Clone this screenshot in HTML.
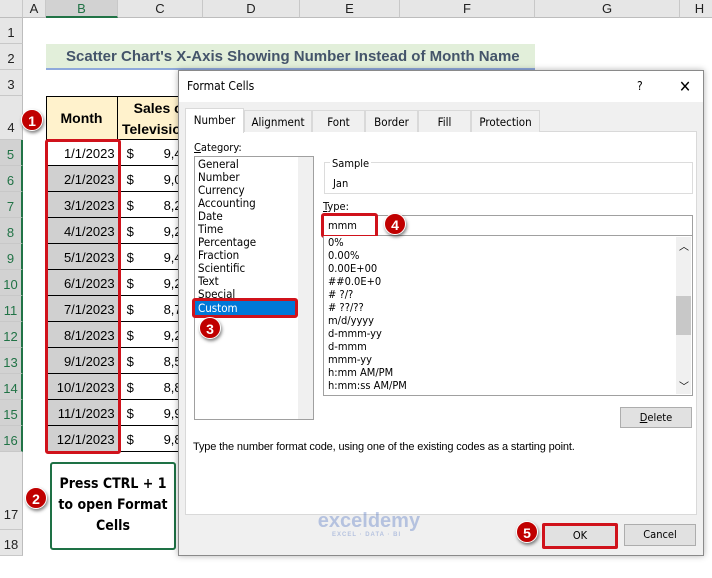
<!DOCTYPE html>
<html><head><style>
*{margin:0;padding:0;box-sizing:border-box}
body{width:712px;height:556px;overflow:hidden;background:#fff;font-family:"Liberation Sans",sans-serif;position:relative}
.a{position:absolute}
.ch{top:0;height:18px;background:#e6e6e6;border-right:1px solid #c8c8c8;border-bottom:1px solid #bdbdbd;font-size:13px;color:#222;text-align:center;line-height:18px}
.rh{left:0;width:23px;background:#e6e6e6;border-bottom:1px solid #c8c8c8;border-right:1px solid #bdbdbd;font-size:13px;color:#222;text-align:center}
.rs{background:#d2d2d2;color:#217346;border-right:2px solid #217346}
.cell{border-bottom:1px solid #000;font-size:13px;height:26px;display:flex}
.cell .d{width:72px;text-align:right;padding:6px 3px 0 0;border-right:1px solid #000;background:#d0d0d0}
.cell .v{position:relative;width:85px}
.cell .v b{font-weight:normal;position:absolute;left:8px;top:6px}
.cell .v i{font-style:normal;position:absolute;left:45px;top:6px}
.badge{width:22px;height:22px;border-radius:50%;background:#c00000;color:#fff;font-weight:bold;font-size:14px;text-align:center;line-height:22px;box-shadow:1px 2px 3px rgba(0,0,0,.5);border:1px solid #fff}
.dl{font-family:"DejaVu Sans Condensed","DejaVu Sans",sans-serif;font-size:11px;color:#000}
.tab{top:110px;height:22px;border:1px solid #d9d9d9;border-bottom:none;background:#f0f0f0;font-size:11.5px;line-height:22px;text-align:center}
</style></head><body>
<div class="a ch" style="left:0;width:23px;background:#e6e6e6"></div>
<div class="a ch" style="left:23px;width:23px">A</div>
<div class="a ch" style="left:46px;width:72px;background:#d2d2d2;color:#217346;border-bottom:2px solid #217346">B</div>
<div class="a ch" style="left:118px;width:85px">C</div>
<div class="a ch" style="left:203px;width:97px">D</div>
<div class="a ch" style="left:300px;width:100px">E</div>
<div class="a ch" style="left:400px;width:135px">F</div>
<div class="a ch" style="left:535px;width:145px">G</div>
<div class="a ch" style="left:680px;width:40px">H</div>
<div class="a rh" style="top:18px;height:26px;line-height:30px">1</div>
<div class="a rh" style="top:44px;height:26px;line-height:30px">2</div>
<div class="a rh" style="top:70px;height:26px;line-height:30px">3</div>
<div class="a rh" style="top:96px;height:44px;line-height:64px">4</div>
<div class="a rh rs" style="top:140px;height:26px;line-height:30px">5</div>
<div class="a rh rs" style="top:166px;height:26px;line-height:30px">6</div>
<div class="a rh rs" style="top:192px;height:26px;line-height:30px">7</div>
<div class="a rh rs" style="top:218px;height:26px;line-height:30px">8</div>
<div class="a rh rs" style="top:244px;height:26px;line-height:30px">9</div>
<div class="a rh rs" style="top:270px;height:26px;line-height:30px">10</div>
<div class="a rh rs" style="top:296px;height:26px;line-height:30px">11</div>
<div class="a rh rs" style="top:322px;height:26px;line-height:30px">12</div>
<div class="a rh rs" style="top:348px;height:26px;line-height:30px">13</div>
<div class="a rh rs" style="top:374px;height:26px;line-height:30px">14</div>
<div class="a rh rs" style="top:400px;height:26px;line-height:30px">15</div>
<div class="a rh rs" style="top:426px;height:26px;line-height:30px">16</div>
<div class="a rh" style="top:452px;height:78px;line-height:126px">17</div>
<div class="a rh" style="top:530px;height:26px;line-height:30px">18</div>
<div class="a" style="left:46px;top:44px;width:489px;height:26px;background:#e2efda;border-bottom:2px solid #8ea9db;font-weight:bold;font-size:15px;color:#44546a;line-height:25px;padding-left:20px">Scatter Chart's X-Axis Showing Number Instead of Month Name</div>
<div class="a" style="left:46px;top:96px;width:157px;height:44px;border:1px solid #000;background:#fff2cc"></div>
<div class="a" style="left:46px;top:96px;width:72px;height:44px;border-right:1px solid #000;font-weight:bold;font-size:14px;line-height:44px;text-align:center">Month</div>
<div class="a" style="left:122px;top:98px;width:80px;font-weight:bold;font-size:14px;line-height:21px;overflow:hidden;white-space:nowrap">&nbsp;&nbsp;&nbsp;Sales of<br>Television</div>
<div class="a" style="left:46px;top:140px;width:157px;height:312px;border-left:1px solid #000">
<div class="cell"><div class="d" style="background:#fff">1/1/2023</div><div class="v"><b>$</b><i>9,4</i></div></div>
<div class="cell"><div class="d">2/1/2023</div><div class="v"><b>$</b><i>9,0</i></div></div>
<div class="cell"><div class="d">3/1/2023</div><div class="v"><b>$</b><i>8,2</i></div></div>
<div class="cell"><div class="d">4/1/2023</div><div class="v"><b>$</b><i>9,2</i></div></div>
<div class="cell"><div class="d">5/1/2023</div><div class="v"><b>$</b><i>9,4</i></div></div>
<div class="cell"><div class="d">6/1/2023</div><div class="v"><b>$</b><i>9,2</i></div></div>
<div class="cell"><div class="d">7/1/2023</div><div class="v"><b>$</b><i>8,7</i></div></div>
<div class="cell"><div class="d">8/1/2023</div><div class="v"><b>$</b><i>9,2</i></div></div>
<div class="cell"><div class="d">9/1/2023</div><div class="v"><b>$</b><i>8,5</i></div></div>
<div class="cell"><div class="d">10/1/2023</div><div class="v"><b>$</b><i>8,8</i></div></div>
<div class="cell"><div class="d">11/1/2023</div><div class="v"><b>$</b><i>9,9</i></div></div>
<div class="cell"><div class="d">12/1/2023</div><div class="v"><b>$</b><i>9,8</i></div></div>
</div>
<div class="a" style="left:45px;top:139px;width:76px;height:315px;border:3px solid #d0121b;border-radius:3px"></div>
<div class="a" style="left:50px;top:462px;width:126px;height:88px;border:2px solid #1e7145;border-radius:3px;font-family:'DejaVu Sans Condensed',sans-serif;font-weight:bold;font-size:14px;text-align:center;line-height:21px;padding-top:10px">Press CTRL + 1<br>to open Format<br>Cells</div>
<div class="a" style="left:178px;top:70px;width:526px;height:486px;background:#f0f0f0;border:1px solid #8a8a8a;box-shadow:0 0 6px rgba(0,0,0,.3)"></div>
<div class="a dl" style="left:179px;top:71px;width:524px;height:31px;background:#fff;font-size:12px;line-height:31px;padding-left:8px">Format Cells<span style="position:absolute;left:458px">?</span><span style="position:absolute;left:500px;font-size:16px">✕</span></div>
<div class="a" style="left:185px;top:131px;width:512px;height:384px;background:#fff;border:1px solid #d9d9d9"></div>
<div class="a tab dl" style="left:185px;top:108px;width:59px;height:25px;background:#fff;border-color:#d9d9d9">Number</div>
<div class="a tab dl" style="left:244px;width:68px">Alignment</div>
<div class="a tab dl" style="left:312px;width:53px">Font</div>
<div class="a tab dl" style="left:365px;width:53px">Border</div>
<div class="a tab dl" style="left:418px;width:53px">Fill</div>
<div class="a tab dl" style="left:471px;width:69px">Protection</div>
<div class="a dl" style="left:194px;top:141px"><u>C</u>ategory:</div>
<div class="a" style="left:194px;top:156px;width:120px;height:264px;border:1px solid #a0a0a0;background:#fff"></div>
<div class="a" style="left:298px;top:157px;width:15px;height:262px;background:#f0f0f0"></div>
<div class="a dl" style="left:198px;top:158px;line-height:13px;font-size:11.5px">General<br>Number<br>Currency<br>Accounting<br>Date<br>Time<br>Percentage<br>Fraction<br>Scientific<br>Text<br>Special</div>
<div class="a dl" style="left:195px;top:300px;width:102px;height:16px;background:#0078d7;color:#fff;padding-left:3px;line-height:16px;font-size:11.5px">Custom</div>
<div class="a" style="left:192px;top:298px;width:106px;height:20px;border:3px solid #d0121b;border-radius:3px"></div>
<div class="a" style="left:324px;top:162px;width:369px;height:32px;border:1px solid #dcdcdc"></div>
<div class="a dl" style="left:330px;top:157px;background:#fff;padding:0 2px">Sample</div>
<div class="a dl" style="left:333px;top:177px">Jan</div>
<div class="a dl" style="left:323px;top:200px"><u>T</u>ype:</div>
<div class="a" style="left:323px;top:215px;width:370px;height:21px;border:1px solid #a0a0a0;background:#fff"></div>
<div class="a dl" style="left:328px;top:219px">mmm</div>
<div class="a" style="left:321px;top:213px;width:57px;height:25px;border:3px solid #d0121b;border-radius:3px"></div>
<div class="a" style="left:323px;top:236px;width:370px;height:160px;border:1px solid #a0a0a0;border-top:none;background:#fff"></div>
<div class="a" style="left:676px;top:237px;width:15px;height:157px;background:#f0f0f0"></div>
<div class="a" style="left:676px;top:296px;width:15px;height:39px;background:#c8c8c8"></div>
<div class="a dl" style="left:679px;top:238px;font-size:10px">︿</div>
<div class="a dl" style="left:679px;top:378px;font-size:10px">﹀</div>
<div class="a dl" style="left:328px;top:236px;line-height:13px">0%<br>0.00%<br>0.00E+00<br>##0.0E+0<br># ?/?<br># ??/??<br>m/d/yyyy<br>d-mmm-yy<br>d-mmm<br>mmm-yy<br>h:mm AM/PM<br>h:mm:ss AM/PM</div>
<div class="a dl" style="left:620px;top:407px;width:72px;height:21px;border:1px solid #adadad;background:#e1e1e1;text-align:center;line-height:19px"><u>D</u>elete</div>
<div class="a" style="left:193px;top:441px;white-space:nowrap;font-family:'Liberation Sans',sans-serif;font-size:11px;letter-spacing:-0.15px">Type the number format code, using one of the existing codes as a starting point.</div>
<div class="a" style="left:290px;top:510px;width:140px;height:30px;opacity:.35;color:#4a6fc0;font-weight:bold;font-size:20px">&nbsp;&nbsp;&nbsp;&nbsp;&nbsp;exceldemy<div style="font-size:6px;letter-spacing:1px;padding-left:42px;line-height:4px">EXCEL · DATA · BI</div></div>
<div class="a dl" style="left:544px;top:525px;width:72px;height:22px;border:1px solid #0078d7;background:#e1e1e1;text-align:center;line-height:20px">OK</div>
<div class="a" style="left:542px;top:523px;width:76px;height:26px;border:3px solid #d0121b;border-radius:2px"></div>
<div class="a dl" style="left:624px;top:524px;width:72px;height:22px;border:1px solid #adadad;background:#e1e1e1;text-align:center;line-height:20px">Cancel</div>
<div class="a badge" style="left:21px;top:109px">1</div>
<div class="a badge" style="left:25px;top:487px">2</div>
<div class="a badge" style="left:199px;top:317px">3</div>
<div class="a badge" style="left:384px;top:213px">4</div>
<div class="a badge" style="left:516px;top:521px">5</div>
</body></html>
